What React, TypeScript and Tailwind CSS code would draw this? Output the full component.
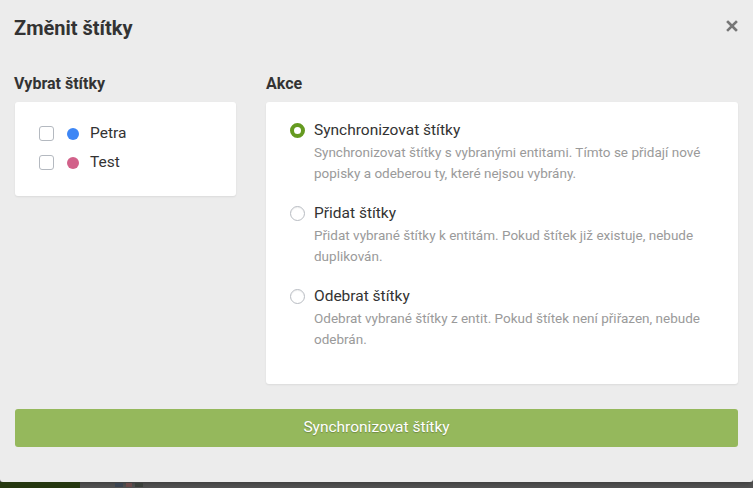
import { useState } from 'react';

const tags = [
  { name: 'Petra', color: 'bg-[#3d86f5]' },
  { name: 'Test', color: 'bg-[#d2618a]' },
];

const actions = [
  {
    id: 'sync',
    title: 'Synchronizovat štítky',
    desc: 'Synchronizovat štítky s vybranými entitami. Tímto se přidají nové popisky a odeberou ty, které nejsou vybrány.',
  },
  {
    id: 'add',
    title: 'Přidat štítky',
    desc: 'Přidat vybrané štítky k entitám. Pokud štítek již existuje, nebude duplikován.',
  },
  {
    id: 'remove',
    title: 'Odebrat štítky',
    desc: 'Odebrat vybrané štítky z entit. Pokud štítek není přiřazen, nebude odebrán.',
  },
];

const App = () => {
  const [action, setAction] = useState('sync');
  const [checked, setChecked] = useState<Record<string, boolean>>({});

  return (
    <div className="w-[753px] h-[488px] bg-[#555555] overflow-hidden font-['Roboto',sans-serif] text-[#333333]">
      {/* Modal */}
      <div className="h-[482px] bg-[#ececec] rounded-b-[3px] shadow-[0_2px_6px_rgba(0,0,0,0.3)] px-[15px] pt-[14px]">
        {/* Header */}
        <div className="flex items-start justify-between">
          <h2 className="text-[20px] leading-[28px] font-bold -ml-px">Změnit štítky</h2>
          <button className="mt-[6px] text-[#777777]">
            <svg width="12" height="12" viewBox="0 0 12 12">
              <path d="M2 2 L10 10 M10 2 L2 10" stroke="currentColor" strokeWidth="2.6" strokeLinecap="square" />
            </svg>
          </button>
        </div>

        {/* Body */}
        <div className="flex gap-[30px] mt-[32px]">
          {/* Tags */}
          <div className="w-[221px] shrink-0">
            <div className="text-[16px] leading-[20px] font-bold -ml-px">Vybrat štítky</div>
            <div className="mt-[8px] bg-white rounded-[3px] shadow-[0_1px_2px_rgba(0,0,0,0.08)] pl-[24px] pt-[17px] pb-[19px]">
              {tags.map((t) => (
                <label key={t.name} className="flex items-center h-[29px] cursor-pointer">
                  <span
                    onClick={() => setChecked((c) => ({ ...c, [t.name]: !c[t.name] }))}
                    className={`w-[15px] h-[15px] rounded-[3px] border ${checked[t.name] ? 'border-[#6a9c26] bg-[#6a9c26]' : 'border-[#b4b9c0] bg-white'}`}
                  />
                  <span className={`ml-[13px] w-[12px] h-[12px] rounded-full ${t.color}`} />
                  <span className="ml-[11px] text-[15.5px] text-[#333333]">{t.name}</span>
                </label>
              ))}
            </div>
          </div>

          {/* Actions */}
          <div className="flex-1">
            <div className="text-[16px] leading-[20px] font-bold">Akce</div>
            <div className="mt-[8px] bg-white rounded-[3px] shadow-[0_1px_2px_rgba(0,0,0,0.08)] pl-[24px] pr-[20px] pt-[18px] pb-[34px] flex flex-col gap-[19px]">
              {actions.map((a) => (
                <div key={a.id} className="flex cursor-pointer" onClick={() => setAction(a.id)}>
                  <span
                    className={`mt-[3px] w-[15px] h-[15px] rounded-full shrink-0 ${
                      action === a.id
                        ? 'border-[4.5px] border-[#659a20] bg-white'
                        : 'border border-[#b8bcc2] bg-white shadow-[inset_0_1px_1px_rgba(0,0,0,0.06)]'
                    }`}
                  />
                  <div className="ml-[9px]">
                    <div className="text-[15.5px] leading-[20px] text-[#333333]">{a.title}</div>
                    <div className="mt-[2px] text-[13.5px] leading-[21px] text-[#9a9a9a]">{a.desc}</div>
                  </div>
                </div>
              ))}
            </div>
          </div>
        </div>

        {/* Submit */}
        <button className="mt-[25px] w-full h-[38px] rounded-[3px] bg-[#95b85c] text-white text-[15.5px] [text-shadow:0_1px_1px_rgba(0,0,0,0.25)]">
          Synchronizovat štítky
        </button>
      </div>

      {/* Page behind the modal */}
      <div className="flex items-center h-[6px]">
        <div className="w-[80px] h-full bg-[#263810]" />
        <div className="ml-[35px] w-[8px] h-[4px] bg-[#3a4350]" />
        <div className="ml-[3px] w-[6px] h-[4px] bg-[#6a4a4a]" />
        <div className="ml-[3px] w-[8px] h-[4px] bg-[#3a3f3a]" />
      </div>
    </div>
  );
};

export default App;
